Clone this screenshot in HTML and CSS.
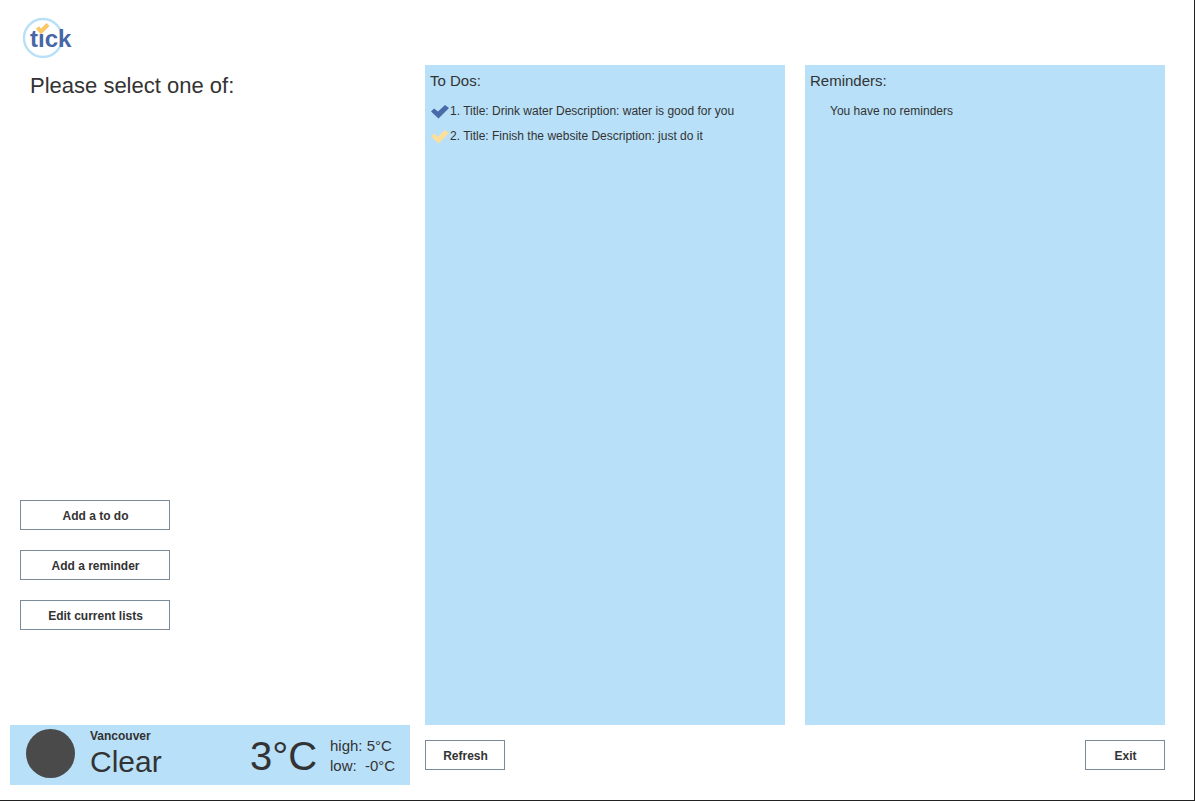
FILE: index.html
```html
<!DOCTYPE html>
<html lang="en">
<head>
<meta charset="utf-8">
<meta name="viewport" content="width=device-width, initial-scale=1">
<title>tick</title>
<link rel="stylesheet" href="styles.css">
</head>
<body>
<div class="app">
  <header class="header">
    <svg class="logo" width="54" height="44" viewBox="0 0 54 44" role="img" aria-label="tick">
      <circle cx="21" cy="22" r="19" fill="none" stroke="#b8e0f7" stroke-width="2.4"/>
      <text class="logo-text" x="8" y="31">tıck</text>
      <path d="M15.500 11.500 L19 15.500 L26 8.500" fill="none" stroke="#fbc766" stroke-width="4"/>
    </svg>
  </header>
  <main class="main">
    <section class="menu">
      <h1 class="prompt">Please select one of:</h1>
      <nav class="actions">
        <button class="button button-wide" type="button">Add a to do</button>
        <button class="button button-wide" type="button">Add a reminder</button>
        <button class="button button-wide" type="button">Edit current lists</button>
      </nav>
    </section>
    <div class="panels">
      <section class="panel">
        <h2 class="panel-title">To Dos:</h2>
        <ul class="list">
          <li class="item">
            <svg class="check check-blue" width="18" height="14" viewBox="0 0 18 14" aria-hidden="true"><path d="M0 6.500 L3 3.500 L7 6.500 L14 0 L18 3 L7.500 13.500 Z"/></svg>
            <span>1. Title: Drink water Description: water is good for you</span>
          </li>
          <li class="item">
            <svg class="check check-yellow" width="18" height="14" viewBox="0 0 18 14" aria-hidden="true"><path d="M0 6.500 L3 3.500 L7 6.500 L14 0 L18 3 L7.500 13.500 Z"/></svg>
            <span>2. Title: Finish the website Description: just do it</span>
          </li>
        </ul>
      </section>
      <section class="panel">
        <h2 class="panel-title">Reminders:</h2>
        <p class="empty">You have no reminders</p>
      </section>
    </div>
  </main>
  <footer class="footer">
    <section class="weather">
      <svg class="sky" width="50" height="50" viewBox="0 0 50 50" aria-hidden="true"><circle cx="25.500" cy="24.500" r="24.500" fill="#4a4a4a"/></svg>
      <div class="place">
        <p class="city">Vancouver</p>
        <p class="condition">Clear</p>
      </div>
      <p class="temperature">3°C</p>
      <div class="range">
        <p>high: 5°C</p>
        <p>low: &nbsp;-0°C</p>
      </div>
    </section>
    <div class="controls">
      <button class="button" type="button">Refresh</button>
      <button class="button" type="button">Exit</button>
    </div>
  </footer>
</div>
</body>
</html>
```
FILE: styles.css
```css
* {
  box-sizing: border-box;
}

body {
  margin: 0;
  background: #ffffff;
  color: #333333;
  font-family: "Liberation Sans", Arial, sans-serif;
  font-size: 12px;
}

h1, h2, p, ul {
  margin: 0;
  padding: 0;
  font-weight: normal;
}

.app {
  display: flex;
  flex-direction: column;
  min-height: 100vh;
  padding: 0 29px 15px 10px;
  border-right: 1px solid #222222;
  border-bottom: 1px solid #222222;
}

.header {
  height: 65px;
  padding: 16px 0 0 12px;
}

.logo {
  display: block;
}

.logo-text {
  fill: #4766a6;
  font-size: 24px;
  font-weight: bold;
}

.main {
  display: grid;
  flex: 1;
  grid-template-columns: 400px 1fr;
  gap: 15px;
}

.menu {
  display: flex;
  flex-direction: column;
  justify-content: space-between;
  padding: 6px 10px 95px;
}

.prompt {
  padding-left: 10px;
  font-size: 22px;
  line-height: 30px;
}

.actions {
  display: flex;
  flex-direction: column;
  align-items: flex-start;
  gap: 20px;
}

.button {
  width: 80px;
  height: 30px;
  padding: 2px 0 0 1px;
  border: 1px solid #7a8a99;
  background: #ffffff;
  color: #333333;
  font-family: inherit;
  font-size: 12px;
  font-weight: bold;
}

.button-wide {
  width: 150px;
}

.panels {
  display: grid;
  grid-template-columns: 1fr 1fr;
  gap: 20px;
}

.panel {
  padding: 6px 5px;
  background: #b8e0f8;
}

.panel-title {
  margin-bottom: 8px;
  font-size: 15px;
  line-height: 20px;
}

.list {
  list-style: none;
}

.item {
  display: flex;
  align-items: center;
  gap: 1px;
  padding-left: 1px;
  line-height: 25px;
}

.check-blue {
  fill: #4a6aa8;
}

.check-yellow {
  fill: #fbdf9a;
}

.empty {
  padding-left: 20px;
  line-height: 25px;
}

.footer {
  display: grid;
  grid-template-columns: 400px 1fr;
  gap: 15px;
}

.weather {
  display: grid;
  grid-template-columns: 50px 145px 65px 1fr;
  align-items: start;
  gap: 15px;
  height: 60px;
  padding-left: 15px;
  background: #b8e0f8;
}

.sky {
  margin-top: 4px;
}

.city {
  font-weight: bold;
  line-height: 22px;
}

.condition {
  font-size: 30px;
  line-height: 30px;
}

.temperature {
  font-size: 40px;
  line-height: 62px;
}

.range {
  padding-top: 11px;
  font-size: 15px;
  line-height: 20px;
}

.controls {
  display: flex;
  align-items: center;
  justify-content: space-between;
}
```
